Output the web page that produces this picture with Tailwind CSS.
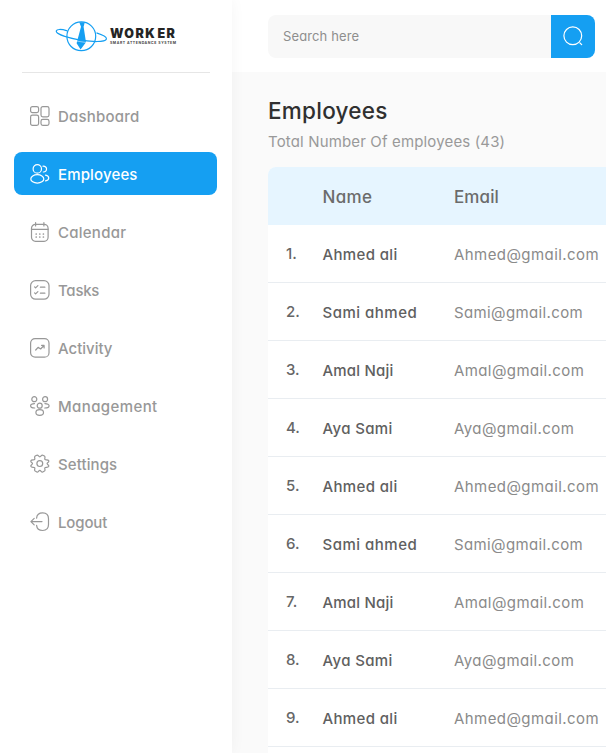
<!DOCTYPE html>
<html lang="en">
<head>
<meta charset="utf-8">
<title>Worker – Employees</title>
<script src="https://cdn.jsdelivr.net/npm/@tailwindcss/browser@4"></script>
</head>
<body class="flex h-[753px] w-[606px] overflow-hidden bg-[#fafafa] font-['Inter','Noto_Sans',sans-serif] [font-feature-settings:'cv11']">
<aside class="relative z-10 flex w-[232px] shrink-0 flex-col bg-white shadow-[0_0_14px_rgba(0,0,0,0.045)]">
  <div class="mx-[22px] flex h-[73px] shrink-0 items-center border-b border-[#e6e6e6] pl-[33px]">
    <svg class="h-[32px] w-[53px] shrink-0" viewBox="0 0 53 32" fill="none" stroke="#159ff2">
      <circle cx="26.3" cy="16.3" r="14.4" stroke-width="1.2"/>
      <path d="M12.300 10.800C6 9 1.800 9 1.300 11C.900 13.300 9 16.800 21.700 19.400C36 22.200 50.500 22.400 51.400 19C51.800 17.200 48 15 41.500 12.900" stroke-width="1.200"/>
      <path d="M24.300 2.200H29.800L28.600 6.800L31 22.300L25.600 29.600L21.600 23.200L26 6.800Z" fill="#159ff2" stroke="none"/>
      <path d="M20.500 20.900L33 22.800" stroke="white" stroke-width=".5"/>
    </svg>
    <div class="ml-[2px] flex flex-col">
      <span class="whitespace-nowrap text-[12.500px] leading-[13px] font-black tracking-[1.400px] text-[#252525] [word-spacing:-2.500px]">WORK ER</span>
      <span class="mt-[1px] whitespace-nowrap text-[3.500px] leading-[4px] font-bold tracking-[0.570px] text-[#444]">SMART ATTENDANCE SYSTEM</span>
    </div>
  </div>
  <nav class="mt-[21.400px] flex flex-col gap-[15px] pr-[15px] pl-[14px] text-[15px] font-medium text-[#989898]">
    <a class="flex h-[43px] items-center gap-[8px] pl-[16px]">
      <svg class="size-5" viewBox="0 0 20 20" fill="none" stroke="currentColor" stroke-width="1.200"><rect x=".6" y=".6" width="8" height="6" rx="1.800"/><rect x="11" y=".6" width="8" height="10.300" rx="1.800"/><rect x=".6" y="9.100" width="8" height="10.300" rx="1.800"/><rect x="11" y="13.400" width="8" height="6" rx="1.800"/></svg>
      <span class="pt-[3px] tracking-[0.200px]">Dashboard</span></a>
    <a class="flex h-[43px] items-center gap-[8px] rounded-[8px] bg-[#159ff2] pl-[16px] text-white">
      <svg class="size-5" viewBox="0 0 20 20" fill="none" stroke="currentColor" stroke-width="1.200" stroke-linecap="round"><circle cx="7.300" cy="4.900" r="4.200"/><ellipse cx="7.300" cy="14.900" rx="6.500" ry="4.200"/><path d="M13 2.200C17.700 2 17.700 8 13.300 8M15.500 11.200C19.800 12.100 19.800 16 15.500 16.900"/></svg>
      <span class="pt-[3px] tracking-[0.150px]">Employees</span></a>
    <a class="flex h-[43px] items-center gap-[8px] pl-[16px]">
      <svg class="size-5" viewBox="0 0 20 20" fill="none" stroke="currentColor" stroke-width="1.200" stroke-linecap="round"><rect x="1.500" y="2.300" width="16.600" height="17" rx="4"/><path d="M1.500 7.300H18.100M5.600 .6V4M13.900 .6V4"/><path d="M6.200 12h.01M9.800 12h.01M13.400 12h.01M6.200 15h.01M9.800 15h.01M13.400 15h.01" stroke-width="1.700"/></svg>
      <span class="pt-[3px] tracking-[0.250px]">Calendar</span></a>
    <a class="flex h-[43px] items-center gap-[8px] pl-[16px]">
      <svg class="size-5" viewBox="0 0 20 20" fill="none" stroke="currentColor" stroke-width="1.200" stroke-linecap="round" stroke-linejoin="round"><rect x=".6" y=".6" width="18.400" height="18.600" rx="5"/><path d="M4.600 6.900L5.600 7.900L7.900 5.600M4.600 12.900L5.600 13.900L7.900 11.600M10.400 7.200H14.900M10.400 13.200H14.900"/></svg>
      <span class="pt-[3px] tracking-[-0.250px]">Tasks</span></a>
    <a class="flex h-[43px] items-center gap-[8px] pl-[16px]">
      <svg class="size-5" viewBox="0 0 20 20" fill="none" stroke="currentColor" stroke-width="1.200" stroke-linecap="round" stroke-linejoin="round"><rect x=".6" y=".6" width="18.400" height="18.600" rx="4.500"/><path d="M5.700 12L8.100 9.300L10.600 11L14 7.500M11.600 7.400H14.100V9.900"/></svg>
      <span class="pt-[3px] tracking-[0px]">Activity</span></a>
    <a class="flex h-[43px] items-center gap-[8px] pl-[16px]">
      <svg class="size-5" viewBox="0 0 20 20" fill="none" stroke="currentColor" stroke-width="1.200" stroke-linecap="round"><circle cx="4.300" cy="3.200" r="2.500"/><circle cx="15.100" cy="3.200" r="2.500"/><circle cx="9.700" cy="9.700" r="2.500"/><ellipse cx="9.700" cy="16.500" rx="3.800" ry="2.800"/><path d="M4.700 12C1.900 12 .6 11 .6 9.700S1.900 7.600 4.500 7.600M14.700 12C17.700 12 19.100 11 19.100 9.700S17.500 7.600 14.900 7.600"/></svg>
      <span class="pt-[3px] tracking-[0.400px]">Management</span></a>
    <a class="flex h-[43px] items-center gap-[8px] pl-[16px]">
      <svg class="size-5" viewBox="0 0 20 20" fill="none" stroke="currentColor" stroke-width="1.200" stroke-linejoin="round"><g transform="translate(-.2 -.4)"><circle cx="10" cy="10" r="2.900"/><path d="M7 1.600C8.500 1 8.700 3.200 10 3.200S11.500 1 13 1.600L14.600 2.500C16 3.400 14.500 4.800 15.100 5.800S18.400 5.700 18.900 7.200C19.500 8.900 17.300 8.800 17.300 10S19.500 11.100 18.900 12.800C18.400 14.300 15.700 13.200 15.100 14.200S16 16.600 14.600 17.500L13 18.400C11.500 19 11.300 16.800 10 16.800S8.500 19 7 18.400L5.400 17.500C4 16.600 5.500 15.200 4.900 14.200S1.600 14.300 1.100 12.800C.5 11.100 2.700 11.200 2.700 10S.5 8.900 1.100 7.200C1.600 5.700 4.300 6.800 4.900 5.800S4 3.400 5.400 2.500Z"/></g></svg>
      <span class="pt-[3px] tracking-[0.100px]">Settings</span></a>
    <a class="flex h-[43px] items-center gap-[8px] pl-[16px]">
      <svg class="size-5" viewBox="0 0 20 20" fill="none" stroke="currentColor" stroke-width="1.200" stroke-linecap="round" stroke-linejoin="round"><path d="M6.600 6.100C6.900 2.200 8.900 .9 12.700 .9C17 .9 18.500 2.500 18.500 6.800V12.600C18.500 16.900 17 18.500 12.700 18.500C8.900 18.500 6.900 17.200 6.600 13.400M12 9.600H1.300M4.200 6.300L.9 9.600L4.200 12.900"/></svg>
      <span class="pt-[3px] tracking-[-0.150px]">Logout</span></a>
  </nav>
</aside>
<main class="flex min-w-0 flex-1 flex-col overflow-hidden">
  <header class="flex h-[72px] shrink-0 items-center bg-white pl-[36px]">
    <div class="flex h-[43px] w-[283px] items-center rounded-l-[8px] bg-[#f8f8f8] pt-[2px] pl-[15px] text-[13px] text-[#8e8e8e]"><span class="tracking-[0.120px]">Search here</span></div>
    <button class="flex h-[43px] w-[43.500px] items-center justify-center rounded-r-[8px] bg-[#159ff2]">
      <svg class="size-5" viewBox="0 0 20 20" fill="none" stroke="white" stroke-width="1.200" stroke-linecap="round"><circle cx="9.800" cy="9.800" r="8.900"/><path d="M17 17L18.700 18.600"/></svg>
    </button>
  </header>
  <section class="flex min-h-0 flex-1 flex-col pl-[36px]">
    <h1 class="pt-[23px] text-[22.500px] leading-[32px] font-medium text-[#303030]"><span class="tracking-[0.260px]">Employees</span></h1>
    <p class="mt-[3px] text-[15px] leading-[24px] whitespace-nowrap text-[#999]"><span class="tracking-[0.150px]">Total Number Of employees (43)</span></p>
    <div class="mt-[13px] min-h-0 flex-1 rounded-tl-[8px] bg-white">
      <div class="grid h-[58px] grid-cols-[54.500px_131.500px_1fr] items-center rounded-tl-[8px] bg-[#e6f5ff] pt-[3px] text-[17px] font-medium text-[#6b6b6b]">
        <span></span><span class="tracking-[0.350px]">Name</span><span class="tracking-[0.100px]">Email</span>
      </div>
      <div id="rows" class="text-[15px]"></div>
    </div>
  </section>
</main>
<script>
const people = [
  ["Ahmed ali", "Ahmed", "tracking-[0.350px]", "tracking-[0.430px]"],
  ["Sami ahmed", "Sami", "tracking-[0.500px]", "tracking-[0.370px]"],
  ["Amal Naji", "Amal", "tracking-[0.200px]", "tracking-[0.400px]"],
  ["Aya Sami", "Aya", "tracking-[0.350px]", "tracking-[0.410px]"]
];
document.getElementById("rows").innerHTML = Array.from({length: 9}, (_, i) => {
  const [name, mail, nameSpacing, mailSpacing] = people[i % 4];
  return `<div class="grid h-[58px] grid-cols-[18px_36.500px_131.500px_1fr] items-center border-b border-[#e9edf1]">
    <span></span><span class="pt-[1px] font-medium text-[#666]">${i + 1}.</span>
    <span class="whitespace-nowrap pt-[3px] font-medium text-[#606060] ${nameSpacing}">${name}</span>
    <span class="whitespace-nowrap pt-[3px] text-[#8a8a8a] ${mailSpacing}">${mail}@gmail.com</span></div>`;
}).join("");
</script>
</body>
</html>
